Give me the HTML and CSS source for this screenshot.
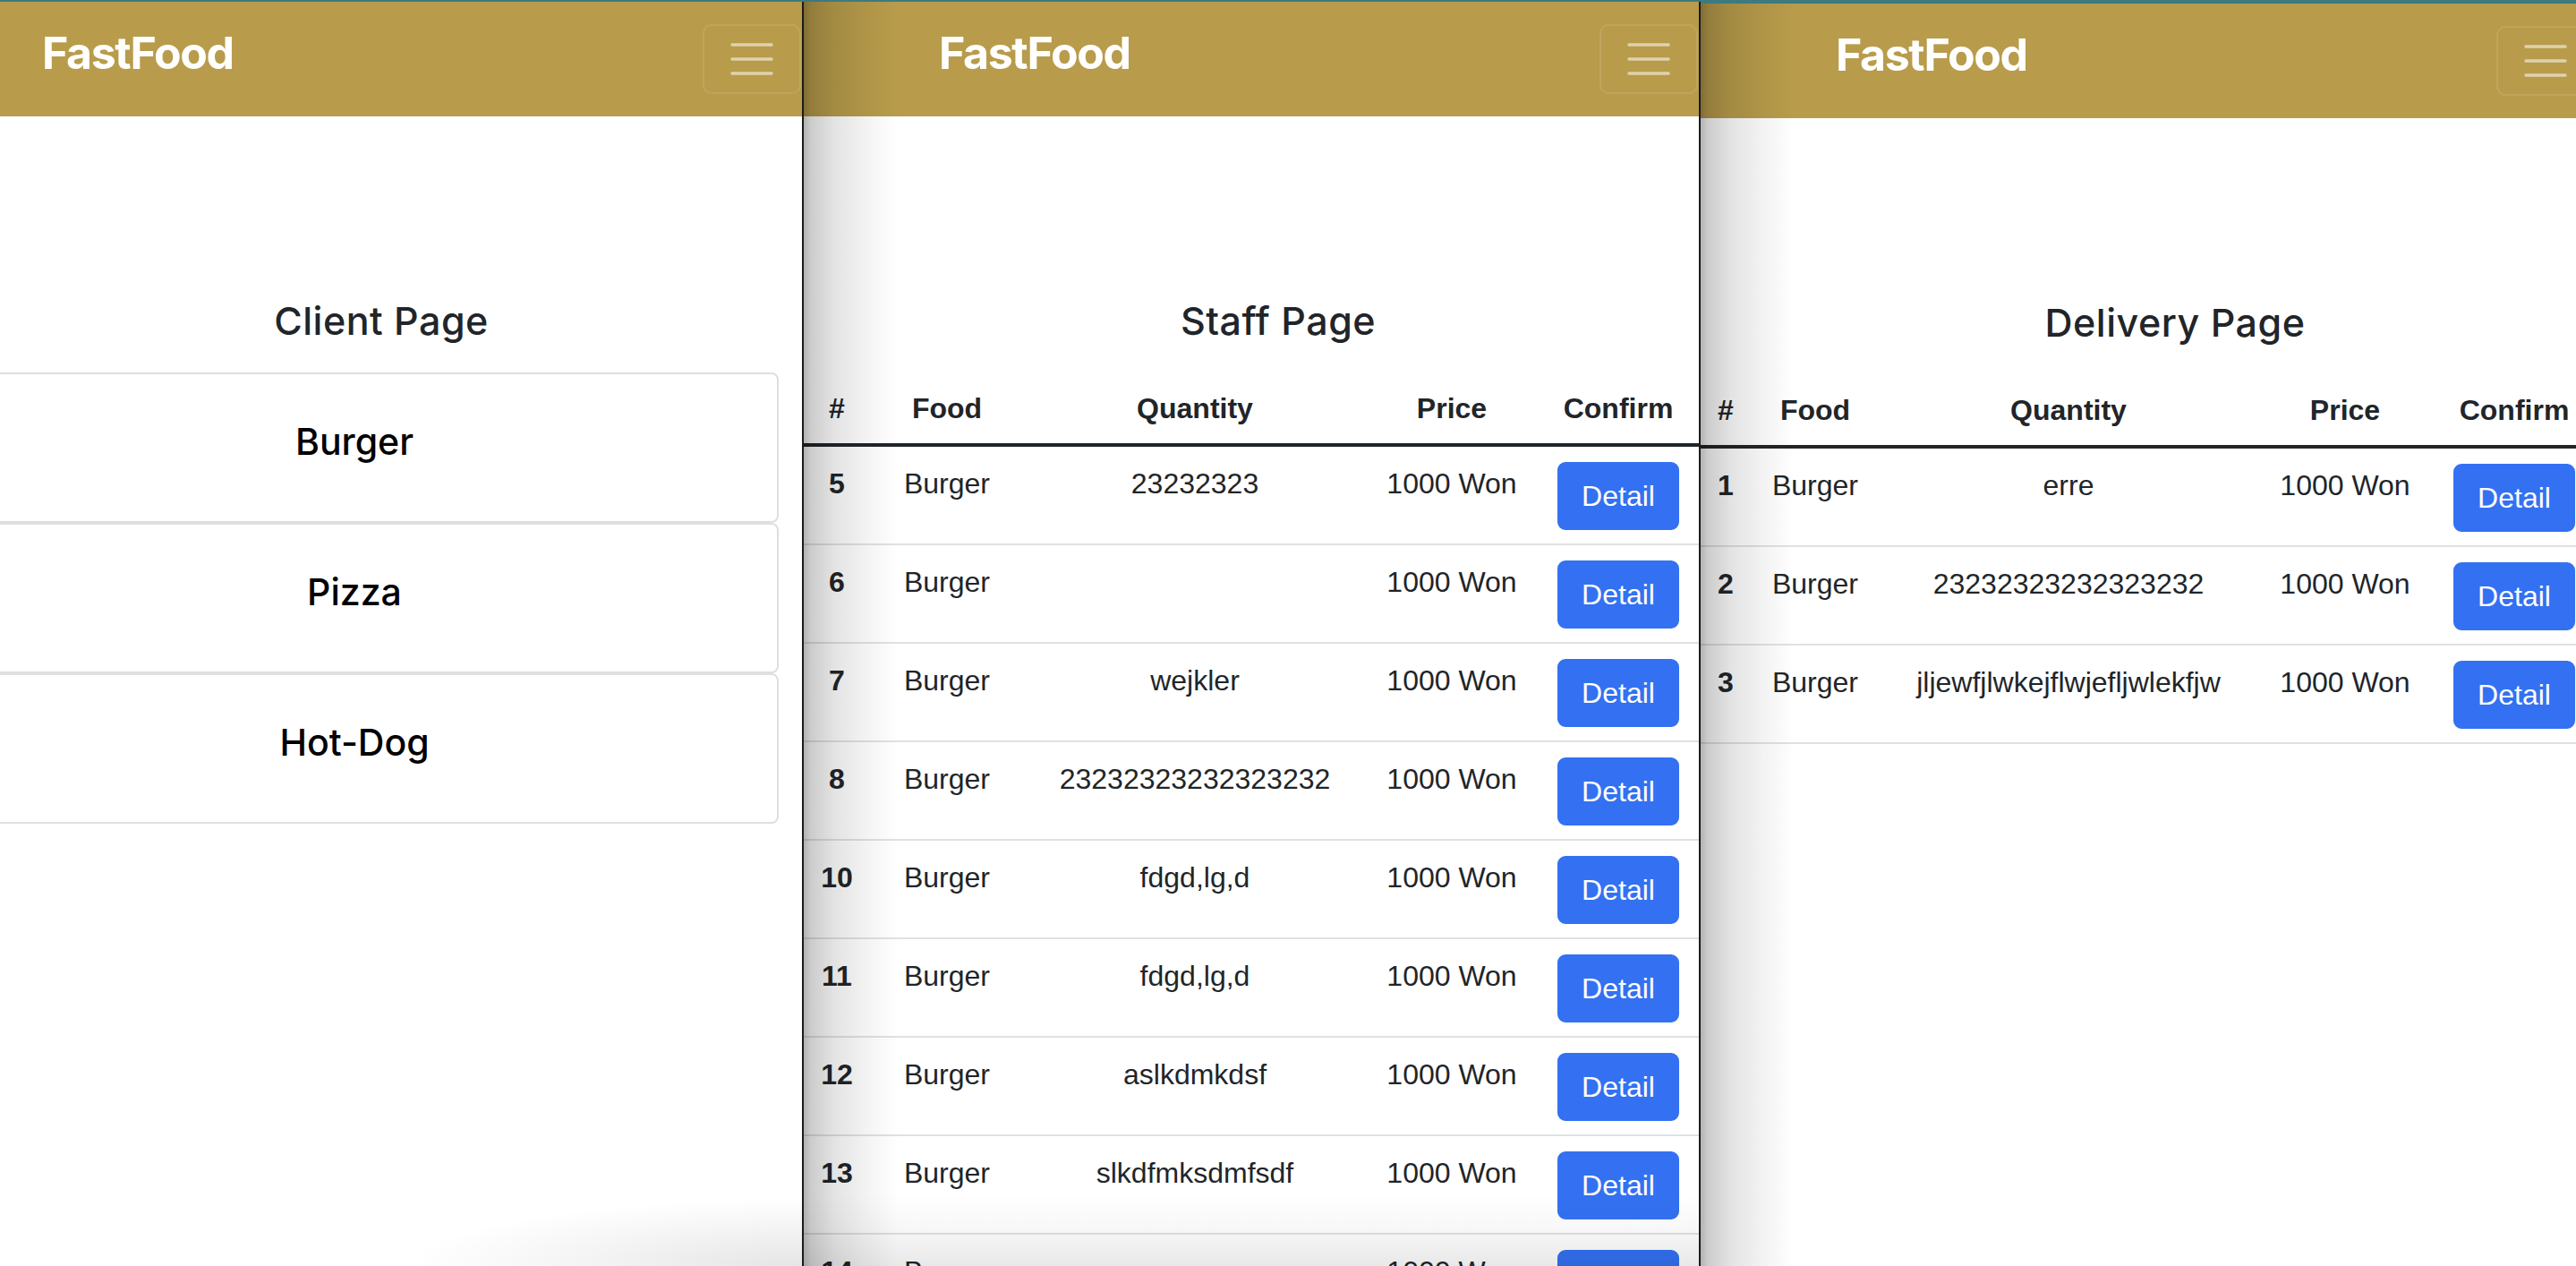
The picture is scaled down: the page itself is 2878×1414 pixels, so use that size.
FILE: index.html
```html
<!DOCTYPE html>
<html lang="en">
<head>
<meta charset="utf-8">
<title>FastFood</title>
<link rel="stylesheet" href="styles.css">
</head>
<body>
<div class="desktop">

  <section class="window win-client">
    <div class="page page-shifted">
      <nav class="navbar">
        <a class="brand">FastFood</a>
        <button class="toggler" type="button" aria-label="Toggle navigation">
          <svg width="48" height="36" viewBox="0 0 48 36"><path d="M2 2H46M2 18H46M2 34H46" stroke="rgba(255,255,255,0.55)" stroke-width="3.5" stroke-linecap="round" fill="none"/></svg>
        </button>
      </nav>
      <main class="content">
        <h3 class="page-title">Client Page</h3>
        <div class="menu">
          <div class="card"><h5 class="card-title">Burger</h5></div>
          <div class="card"><h5 class="card-title">Pizza</h5></div>
          <div class="card"><h5 class="card-title">Hot-Dog</h5></div>
        </div>
      </main>
    </div>
  </section>

  <section class="window win-staff">
    <div class="page">
      <nav class="navbar">
        <a class="brand">FastFood</a>
        <button class="toggler" type="button" aria-label="Toggle navigation">
          <svg width="48" height="36" viewBox="0 0 48 36"><path d="M2 2H46M2 18H46M2 34H46" stroke="rgba(255,255,255,0.55)" stroke-width="3.5" stroke-linecap="round" fill="none"/></svg>
        </button>
      </nav>
      <main class="content">
        <h3 class="page-title">Staff Page</h3>
        <table class="orders staff">
          <colgroup><col class="c1"><col class="c2"><col class="c3"><col class="c4"><col class="c5"></colgroup>
          <thead><tr><th>#</th><th>Food</th><th>Quantity</th><th>Price</th><th>Confirm</th></tr></thead>
          <tbody>
            <tr><td class="num">5</td><td>Burger</td><td>23232323</td><td>1000 Won</td><td><button class="btn">Detail</button></td></tr>
            <tr><td class="num">6</td><td>Burger</td><td></td><td>1000 Won</td><td><button class="btn">Detail</button></td></tr>
            <tr><td class="num">7</td><td>Burger</td><td>wejkler</td><td>1000 Won</td><td><button class="btn">Detail</button></td></tr>
            <tr><td class="num">8</td><td>Burger</td><td>23232323232323232</td><td>1000 Won</td><td><button class="btn">Detail</button></td></tr>
            <tr><td class="num">10</td><td>Burger</td><td>fdgd,lg,d</td><td>1000 Won</td><td><button class="btn">Detail</button></td></tr>
            <tr><td class="num">11</td><td>Burger</td><td>fdgd,lg,d</td><td>1000 Won</td><td><button class="btn">Detail</button></td></tr>
            <tr><td class="num">12</td><td>Burger</td><td>aslkdmkdsf</td><td>1000 Won</td><td><button class="btn">Detail</button></td></tr>
            <tr><td class="num">13</td><td>Burger</td><td>slkdfmksdmfsdf</td><td>1000 Won</td><td><button class="btn">Detail</button></td></tr>
            <tr><td class="num">14</td><td>Burger</td><td>ouoer</td><td>1000 Won</td><td><button class="btn">Detail</button></td></tr>
          </tbody>
        </table>
      </main>
    </div>
  </section>

  <section class="window win-delivery">
    <div class="page">
      <nav class="navbar">
        <a class="brand">FastFood</a>
        <button class="toggler" type="button" aria-label="Toggle navigation">
          <svg width="48" height="36" viewBox="0 0 48 36"><path d="M2 2H46M2 18H46M2 34H46" stroke="rgba(255,255,255,0.55)" stroke-width="3.5" stroke-linecap="round" fill="none"/></svg>
        </button>
      </nav>
      <main class="content">
        <h3 class="page-title">Delivery Page</h3>
        <table class="orders delivery">
          <colgroup><col class="c1"><col class="c2"><col class="c3"><col class="c4"><col class="c5"></colgroup>
          <thead><tr><th>#</th><th>Food</th><th>Quantity</th><th>Price</th><th>Confirm</th></tr></thead>
          <tbody>
            <tr><td class="num">1</td><td>Burger</td><td>erre</td><td>1000 Won</td><td><button class="btn">Detail</button></td></tr>
            <tr><td class="num">2</td><td>Burger</td><td>23232323232323232</td><td>1000 Won</td><td><button class="btn">Detail</button></td></tr>
            <tr><td class="num">3</td><td>Burger</td><td>jljewfjlwkejflwjefljwlekfjw</td><td>1000 Won</td><td><button class="btn">Detail</button></td></tr>
          </tbody>
        </table>
      </main>
    </div>
  </section>

</div>
</body>
</html>
```

FILE: styles.css
```css
html, body {
  margin: 0;
  padding: 0;
}

body {
  width: 2878px;
  height: 1414px;
  overflow: hidden;
  background: #3d7a80;
}

.desktop {
  display: flex;
  height: 1414px;
}

.window {
  position: relative;
  overflow: hidden;
  background: #ffffff;
  flex: none;
  box-sizing: border-box;
}

.win-client {
  width: 898px;
  height: 1412px;
  margin-top: 2px;
  border-right: 2px solid #1b1b1b;
}

.win-staff {
  width: 1002px;
  height: 1412px;
  margin-top: 2px;
  border-right: 2px solid #1b1b1b;
}

.win-delivery {
  flex: 1;
  height: 1410px;
  margin-top: 4px;
}

/* shadow cast by the window on top */
.win-staff::after,
.win-delivery::after {
  content: "";
  position: absolute;
  inset: 0;
  pointer-events: none;
  background:
    linear-gradient(to right,
      rgba(0, 0, 0, 0.30) 0,
      rgba(0, 0, 0, 0.20) 8px,
      rgba(0, 0, 0, 0.11) 34px,
      rgba(0, 0, 0, 0.05) 68px,
      rgba(0, 0, 0, 0) 105px);
}

.win-staff::after {
  background:
    linear-gradient(to right,
      rgba(0, 0, 0, 0.30) 0,
      rgba(0, 0, 0, 0.20) 8px,
      rgba(0, 0, 0, 0.11) 34px,
      rgba(0, 0, 0, 0.05) 68px,
      rgba(0, 0, 0, 0) 105px),
    linear-gradient(to top,
      rgba(0, 0, 0, 0.09) 0,
      rgba(0, 0, 0, 0.03) 40px,
      rgba(0, 0, 0, 0) 80px);
}

.win-client::after {
  content: "";
  position: absolute;
  right: 0;
  bottom: 0;
  width: 560px;
  height: 80px;
  pointer-events: none;
  background: radial-gradient(ellipse 440px 75px at 100% 100%,
    rgba(0, 0, 0, 0.10), rgba(0, 0, 0, 0.04) 60%, rgba(0, 0, 0, 0) 100%);
}

.page {
  width: 1000px;
}

.page-shifted {
  margin-left: -104px;
}

/* navbar */
.navbar {
  display: flex;
  align-items: center;
  height: 128px;
  box-sizing: border-box;
  padding-left: 151px;
  background: #b89c4b;
}

.brand {
  align-self: flex-start;
  margin-top: 32px;
  font-family: Inter, "Liberation Sans", sans-serif;
  font-weight: 700;
  font-size: 50px;
  line-height: 50px;
  letter-spacing: -1.4px;
  color: #ffffff;
  text-decoration: none;
}

.toggler {
  margin-left: auto;
  margin-right: 1px;
  width: 110px;
  height: 78px;
  box-sizing: border-box;
  padding: 0;
  border: 2px solid rgba(255, 255, 255, 0.1);
  border-radius: 10px;
  background: transparent;
  display: flex;
  align-items: center;
  justify-content: center;
}

.toggler svg {
  display: block;
}

/* content */
.page-title {
  margin: 203px 0 33px;
  padding-left: 60px;
  text-align: center;
  font-family: Inter, "Liberation Sans", sans-serif;
  font-weight: 500;
  font-size: 43px;
  line-height: 50px;
  letter-spacing: 0.5px;
  color: #212529;
}

.menu {
  padding: 0 26px;
}

.card {
  height: 168px;
  box-sizing: border-box;
  border: 2px solid #dfdfdf;
  border-radius: 8px;
  padding-top: 51px;
  text-align: center;
}

.card-title {
  margin: 0;
  font-family: Inter, "Liberation Sans", sans-serif;
  font-weight: 500;
  font-size: 41px;
  line-height: 49px;
  color: #000000;
}

/* tables */
.orders {
  width: 1000px;
  table-layout: fixed;
  border-collapse: separate;
  border-spacing: 0;
  font-family: "Liberation Sans", Arial, sans-serif;
  font-size: 32px;
  line-height: 48px;
  color: #212529;
}

.orders th {
  font-weight: 700;
  padding: 16px 8px 15px;
  border-bottom: 4px solid #212529;
  text-align: center;
  vertical-align: top;
  white-space: nowrap;
}

.orders td {
  padding: 17px 8px 15px;
  border-bottom: 2px solid #dee2e6;
  text-align: center;
  vertical-align: top;
  white-space: nowrap;
}

.orders td.num {
  font-weight: 700;
}

.staff .c1 { width: 74px; }
.staff .c2 { width: 172px; }
.staff .c3 { width: 382px; }
.staff .c4 { width: 192px; }
.staff .c5 { width: 180px; }

.delivery .c1 { width: 56px; }
.delivery .c2 { width: 144px; }
.delivery .c3 { width: 422px; }
.delivery .c4 { width: 196px; }
.delivery .c5 { width: 182px; }

.btn {
  display: block;
  margin: 0 auto;
  box-sizing: border-box;
  height: 76px;
  padding: 12px 25px;
  font-family: "Liberation Sans", Arial, sans-serif;
  font-size: 32px;
  line-height: 48px;
  color: #ffffff;
  background: #3371f2;
  border: 2px solid #3371f2;
  border-radius: 9px;
}
```
